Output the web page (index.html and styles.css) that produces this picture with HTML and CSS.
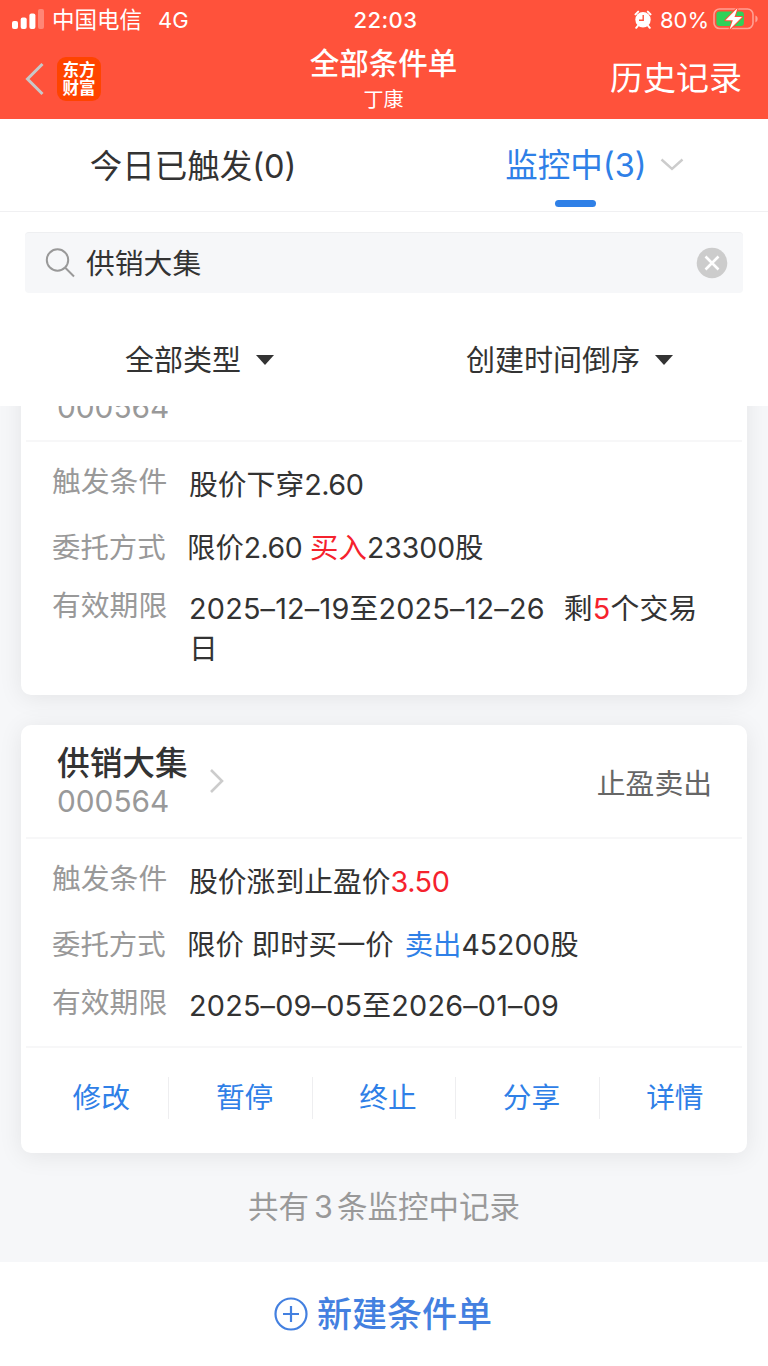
FILE: index.html
```html
<!DOCTYPE html>
<html lang="zh-CN">
<head>
    <meta charset="UTF-8">
    <meta name="viewport" content="width=device-width, initial-scale=1.0">
    <title>全部条件单</title>
    <link rel="stylesheet" href="styles.css">
</head>
<body>

<!-- Header -->
<header class="header">
    <div class="status-bar">
        <div class="status-left">
            <svg class="signal" width="32" height="20" viewBox="0 0 32 20" fill="#fff">
                <rect x="0" y="12" width="6" height="8" rx="2"/>
                <rect x="8.7" y="8.5" width="6" height="11.5" rx="2"/>
                <rect x="17.4" y="4.5" width="6" height="15.5" rx="2"/>
                <rect x="26" y="0" width="6" height="20" rx="2" opacity=".3"/>
            </svg>
            <span class="carrier">中国电信</span>
            <span class="network">4G</span>
        </div>
        <div class="clock">22:03</div>
        <div class="status-right">
            <svg class="alarm" width="18" height="19" viewBox="0 0 18 19">
                <circle cx="9" cy="9.7" r="7.7" fill="#fff"/>
                <path d="M1.500 4.400 4.200 1.600M16.500 4.400 13.800 1.600M3.800 15.800 2.200 17.800M14.200 15.800 15.800 17.800" stroke="#fff" stroke-width="2" stroke-linecap="round"/>
                <path d="M9.200 5v5.200H5" fill="none" stroke="#ff523b" stroke-width="1.4"/>
            </svg>
            <span class="percent">80%</span>
            <svg class="battery" width="46" height="24" viewBox="0 0 46 24">
                <rect x="1" y="2" width="39" height="19.500" rx="5.5" fill="none" stroke="#fff" stroke-opacity=".45" stroke-width="1.6"/>
                <path d="M42.400 8.600c3 1 3 5.800 0 6.800z" fill="#fff" opacity=".45"/>
                <rect x="3.400" y="4.500" width="27.500" height="14.500" rx="3" fill="#30d158"/>
                <path d="M24.500 1 12.500 13.200h7.300L16.500 22.500 29 10h-7.500z" fill="#fff" stroke="#ff523b" stroke-width="2" stroke-linejoin="round" paint-order="stroke"/>
            </svg>
        </div>
    </div>
    <div class="nav">
        <div class="nav-left">
            <svg width="20" height="34" viewBox="0 0 20 34">
                <path d="M17.500 2 2.500 17l15 15" fill="none" stroke="#c8c8c8" stroke-width="3"/>
            </svg>
            <div class="logo">东方<br>财富</div>
        </div>
        <div class="nav-title">
            <h1>全部条件单</h1>
            <p>丁康</p>
        </div>
        <a class="history" href="#history">历史记录</a>
    </div>
</header>

<!-- Tabs -->
<div class="tabs">
    <a class="tab" href="#triggered">今日已触发(0)</a>
    <a class="tab active" href="#monitoring">
        <span>监控中(3)</span>
        <svg width="24" height="14" viewBox="0 0 24 14">
            <path d="M1.500 1.500 12 11l10.500-9.500" fill="none" stroke="#ccc" stroke-width="2.400"/>
        </svg>
    </a>
</div>

<!-- Search and filters -->
<div class="search">
    <svg width="30" height="30" viewBox="0 0 30 30" fill="none" stroke="#999" stroke-width="2">
        <circle cx="12.500" cy="12" r="10.700"/>
        <path d="M20 19.500 29 28.500"/>
    </svg>
    <span class="search-text">供销大集</span>
    <svg class="clear" width="32" height="32" viewBox="0 0 32 32">
        <circle cx="16" cy="16" r="15.300" fill="#ccc"/>
        <path d="M9.500 9.500l13 13M22.500 9.500l-13 13" stroke="#fff" stroke-width="2.600"/>
    </svg>
</div>
<div class="filters">
    <div class="filter">全部类型 <i class="caret"></i></div>
    <div class="filter">创建时间倒序 <i class="caret"></i></div>
</div>

<!-- Order list -->
<main class="list">
    <section class="card scrolled">
        <div class="card-head">
            <div class="stock">
                <h2>供销大集</h2>
                <p>000564</p>
            </div>
        </div>
        <div class="card-body">
            <div class="row">
                <span class="label">触发条件</span>
                <span class="value">股价下穿<span class="price">2.60</span></span>
            </div>
            <div class="row method">
                <span class="label">委托方式</span>
                <span class="value">限价<span class="price">2.60</span> <b class="buy">买入</b>23300股</span>
            </div>
            <div class="row">
                <span class="label">有效期限</span>
                <span class="value date">2025–12–19至2025–12–26<span class="remain">剩<b class="buy">5</b>个交易日</span></span>
            </div>
        </div>
    </section>

    <section class="card">
        <div class="card-head">
            <div class="stock">
                <h2>供销大集</h2>
                <p>000564</p>
            </div>
            <svg class="arrow" width="16" height="26" viewBox="0 0 16 26">
                <path d="M2 2l11 11L2 24" fill="none" stroke="#ccc" stroke-width="2.600"/>
            </svg>
            <span class="type">止盈卖出</span>
        </div>
        <div class="card-body">
            <div class="row">
                <span class="label">触发条件</span>
                <span class="value">股价涨到止盈价<b class="buy price">3.50</b></span>
            </div>
            <div class="row method">
                <span class="label">委托方式</span>
                <span class="value">限价 即时买一价 <b class="sell">卖出</b>45200股</span>
            </div>
            <div class="row">
                <span class="label">有效期限</span>
                <span class="value date">2025–09–05至2026–01–09</span>
            </div>
        </div>
        <div class="actions">
            <a href="#edit">修改</a>
            <a href="#pause">暂停</a>
            <a href="#stop">终止</a>
            <a href="#share">分享</a>
            <a href="#detail">详情</a>
        </div>
    </section>

    <p class="total">共有<span>3</span>条监控中记录</p>
</main>

<!-- Bottom button -->
<footer class="footer">
    <svg width="34" height="34" viewBox="0 0 34 34" fill="none" stroke="#4380e0" stroke-width="2.200">
        <circle cx="17" cy="17" r="15.500"/>
        <path d="M17 9v16M9 17h16"/>
    </svg>
    <span>新建条件单</span>
</footer>

</body>
</html>
```
FILE: styles.css
```css
* {
    box-sizing: border-box;
}

body {
    margin: 0;
    height: 1366px;
    display: flex;
    flex-direction: column;
    overflow: hidden;
    background-color: #fff;
    color: #333;
    font-family: Inter, "Noto Sans CJK SC", sans-serif;
}

h1, h2, p {
    margin: 0;
}

a {
    color: inherit;
    text-decoration: none;
}

b {
    font-weight: normal;
}

svg {
    display: block;
    flex: none;
}

/* Header */
.header {
    height: 119px;
    flex: none;
    background-color: #ff523b;
    color: #fff;
}

.status-bar {
    display: grid;
    grid-template-columns: 1fr auto 1fr;
    align-items: center;
    height: 40px;
    padding: 0 9px 0 12px;
    font-size: 22px;
    line-height: 40px;
}

.status-left {
    display: flex;
    align-items: center;
}

.signal {
    margin-top: -2px;
}

.carrier {
    margin-left: 8px;
    font-size: 22.5px;
}

.network {
    margin-left: 16px;
}

.clock {
    font-weight: 500;
    letter-spacing: 0.4px;
}

.status-right {
    display: flex;
    align-items: center;
    justify-content: flex-end;
}

.alarm {
    margin-top: -2px;
}

.battery {
    margin-top: -2px;
}

.percent {
    margin-left: 8px;
    margin-right: 4px;
}

.nav {
    display: grid;
    grid-template-columns: 1fr auto 1fr;
    height: 79px;
    padding: 0 26px 0 25px;
}

.nav-left {
    display: flex;
    align-items: center;
    gap: 12px;
    height: 77px;
}

.logo {
    width: 44px;
    height: 44px;
    padding-top: 4px;
    border-radius: 9px;
    background-color: #ff4400;
    font-size: 16.5px;
    font-weight: bold;
    line-height: 18px;
    text-align: center;
}

.nav-title {
    text-align: center;
}

.nav-title h1 {
    margin-top: 3px;
    font-size: 29.5px;
    font-weight: 500;
    line-height: 40px;
}

.nav-title p {
    margin-top: 2px;
    font-size: 20px;
    line-height: 30px;
}

.history {
    font-size: 33px;
    line-height: 77px;
    text-align: right;
}

/* Tabs */
.tabs {
    display: flex;
    flex: none;
    height: 93px;
    border-bottom: 1px solid #f0f0f2;
    font-size: 32.5px;
    line-height: 95px;
}

.tab {
    position: relative;
    width: 50%;
    padding-left: 2px;
    text-align: center;
}

.tab.active {
    display: flex;
    align-items: center;
    justify-content: center;
    gap: 13px;
    padding-left: 37px;
    color: #2f80e7;
}

.tab.active::after {
    content: "";
    position: absolute;
    left: 171px;
    bottom: 4px;
    width: 41px;
    height: 7px;
    border-radius: 4px;
    background-color: #2f80e7;
}

/* Search */
.search {
    display: flex;
    align-items: center;
    flex: none;
    height: 61px;
    margin: 20px 25px 0;
    padding: 0 15px 0 20px;
    border-top: 1px solid #eeeff1;
    border-radius: 4px;
    background-color: #f6f7f9;
    font-size: 28.8px;
}

.search-text {
    margin-left: 11px;
    margin-top: -3px;
}

.clear {
    margin-left: auto;
}

/* Filters */
.filters {
    display: flex;
    align-items: center;
    justify-content: space-between;
    flex: none;
    height: 113px;
    padding: 23px 95px 0 125px;
    font-size: 29px;
    line-height: 44px;
}

.filter {
    display: flex;
    align-items: center;
    gap: 15px;
}

.caret {
    margin-top: -3px;
    border-left: 9px solid transparent;
    border-right: 9px solid transparent;
    border-top: 10px solid #333;
}

/* Cards */
.list {
    flex: none;
    height: 856px;
    padding: 0 21px;
    overflow: hidden;
    background-color: #f6f7f9;
}

.card {
    margin-bottom: 31px;
    border-radius: 10px;
    background-color: #fff;
    box-shadow: 0 3px 24px rgba(0, 0, 0, 0.08);
}

/* The first card is scrolled under the filters */
.card.scrolled {
    height: 367px;
    margin-top: -78px;
    margin-bottom: 30px;
}

.card.scrolled .card-head {
    height: 114px;
}

.card-head {
    display: flex;
    align-items: center;
    height: 114px;
    margin: 0 5px;
    padding: 0 30px 0 31px;
    border-bottom: 2px solid #f7f7f8;
}

.card.scrolled .stock {
    padding-top: 6px;
}

.stock h2 {
    font-size: 32.7px;
    font-weight: 500;
    line-height: 40px;
}

.stock p {
    color: #999;
    font-size: 29.8px;
    line-height: 36px;
}

.arrow {
    margin-left: 21px;
}

.type {
    margin-left: auto;
    color: #666;
    font-size: 28.8px;
}

.card-body {
    padding: 20px 31px 0;
}

.row {
    display: flex;
    font-size: 28.8px;
    line-height: 40px;
}

.row .label {
    flex: none;
    width: 137px;
    color: #999;
}

.row .value {
    padding-top: 3px;
}

.row .date {
    letter-spacing: 0.2px;
}

.row .price {
    letter-spacing: -0.5px;
}

.row.method {
    margin: 23px 0 18px;
    font-size: 28.4px;
}

.row.method .label {
    width: 135px;
}

.row.method .value {
    padding-top: 0;
}

.remain {
    margin-left: 19px;
}

.buy {
    color: #f5222d;
}

.sell {
    margin-left: 3px;
    color: #2f80e7;
}

/* Card buttons */
.actions {
    display: flex;
    align-items: center;
    height: 107px;
    margin: 20px 5px 0;
    border-top: 2px solid #f7f7f8;
    color: #2f80e7;
    font-size: 28.7px;
}

.actions a {
    flex: 1;
    height: 42px;
    margin-top: -6px;
    padding-left: 8px;
    border-right: 1px solid #eeeef0;
    line-height: 41px;
    text-align: center;
}

.actions a:last-child {
    border-right: none;
}

.total {
    color: #999;
    font-size: 30.5px;
    line-height: 46px;
    text-align: center;
}

.total span {
    margin: 0 4px 0 5px;
}

/* Footer */
.footer {
    display: flex;
    align-items: center;
    justify-content: center;
    gap: 9px;
    height: 104px;
    padding-right: 2px;
    color: #4380e0;
    font-size: 35px;
    font-weight: 500;
}

.footer span {
    margin-top: -5px;
}
```
